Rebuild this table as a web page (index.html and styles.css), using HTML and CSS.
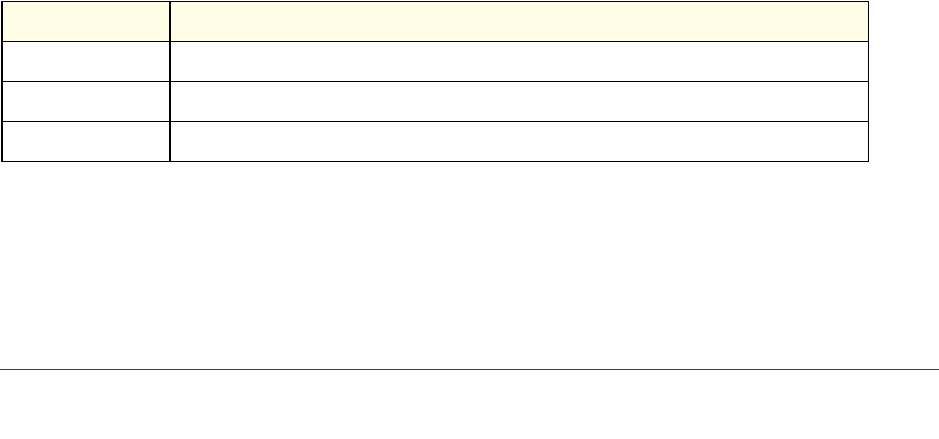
FILE: index.html
```html
<!DOCTYPE html>
<html lang="en">

<head>
    <meta charset="UTF-8">
    <title>Table</title>
    <link rel="stylesheet" href="styles.css">
</head>

<body>
    <table class="grid">
        <tr class="head">
            <td class="key"></td>
            <td class="val"></td>
        </tr>
        <tr>
            <td class="key"></td>
            <td class="val"></td>
        </tr>
        <tr>
            <td class="key"></td>
            <td class="val"></td>
        </tr>
        <tr>
            <td class="key"></td>
            <td class="val"></td>
        </tr>
    </table>

    <div class="rule"></div>
</body>

</html>
```

FILE: styles.css
```css
body {
    margin: 0;
    padding: 1px 0 0 1px;
    background: #fff;
    font-family: "Liberation Sans", Arial, sans-serif;
}

.grid {
    border-collapse: separate;
    border-spacing: 0;
    border-top: 1px solid #000;
    border-left: 2px solid #000;
    border-right: 1px solid #000;
}

.grid td {
    height: 39px;
    padding: 0;
    border-bottom: 1px solid #000;
}

.grid .key {
    width: 166px;
    border-right: 2px solid #000;
}

.grid .val {
    width: 697px;
}

.head td {
    background: #fffde6;
}

.rule {
    height: 1px;
    margin: 207px 0 0 -1px;
    background: #333380;
}
```
